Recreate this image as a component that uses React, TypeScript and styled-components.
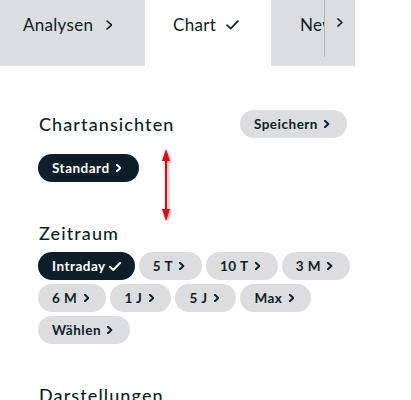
import React from 'react'
import styled, { createGlobalStyle } from 'styled-components'

const GlobalStyle = createGlobalStyle`
  html, body {
    margin: 0;
    padding: 0;
    background: #ffffff;
  }
  body {
    font-family: Lato, "Noto Sans", sans-serif;
    color: #0d1f28;
  }
`

const Page = styled.div`
  position: relative;
  width: 355px;
`

const TabStrip = styled.div`
  position: relative;
  display: flex;
  height: 66px;
  overflow: hidden;
`

const Tab = styled.div<{ $active?: boolean; $padLeft?: number; $width?: number }>`
  flex: none;
  display: flex;
  align-items: flex-start;
  gap: 8px;
  box-sizing: border-box;
  width: ${p => (p.$width ? `${p.$width}px` : 'auto')};
  padding: 15px 28px 0 ${p => p.$padLeft ?? 28}px;
  background: ${p => (p.$active ? '#ffffff' : '#dcdddf')};
  font-size: 17px;
  line-height: 20px;
  letter-spacing: 0.3px;
  color: #0d1f28;
  white-space: nowrap;
`

const TabIcon = styled.span`
  display: flex;
  align-items: center;
  justify-content: center;
  width: 16px;
  height: 20px;
`

const ScrollButton = styled.div`
  position: absolute;
  top: 0;
  right: 0;
  width: 31px;
  height: 57px;
  display: flex;
  justify-content: center;
  padding-top: 18px;
  box-sizing: border-box;
  background: #dcdddf;
  border-left: 1px solid #b4b5b7;
`

const Content = styled.div`
  padding: 44px 8px 0 38px;
  display: flex;
  flex-direction: column;
`

const Section = styled.section`
  display: flex;
  flex-direction: column;
  & + & {
    margin-top: 39px;
  }
`

const SectionHeader = styled.div`
  display: flex;
  align-items: center;
  justify-content: space-between;
  height: 28px;
  margin-bottom: 16px;
`

const Heading = styled.h2<{ $tight?: boolean }>`
  margin: ${p => (p.$tight ? '0 0 7px' : '0')};
  padding-left: 1px;
  font-size: 18px;
  line-height: 24px;
  font-weight: 500;
  letter-spacing: 1.1px;
  color: #0d1f28;
`

const Chips = styled.div`
  display: flex;
  flex-wrap: wrap;
  gap: 4px;
  margin-right: -7px;
`

const Chip = styled.button<{ $active?: boolean }>`
  display: inline-flex;
  align-items: center;
  gap: 1px;
  height: 28px;
  padding: 0 12px 0 14px;
  border: none;
  border-radius: 14px;
  background: ${p => (p.$active ? '#0c1f28' : '#dcdddf')};
  color: ${p => (p.$active ? '#ffffff' : '#0d1f28')};
  font-family: Lato, "Noto Sans", sans-serif;
  font-size: 13.5px;
  font-weight: 700;
  letter-spacing: 0.5px;
  white-space: nowrap;
  cursor: pointer;
`

const ChipIcon = styled.span`
  display: flex;
  align-items: center;
  justify-content: center;
  width: 16px;
  height: 16px;
`

const Annotation = styled.svg`
  position: absolute;
  left: 158px;
  top: 147px;
  overflow: visible;
`

const Chevron = ({ size = 8, stroke = 2 }: { size?: number; stroke?: number }) => (
  <svg width={size * 0.65} height={size} viewBox="0 0 6.5 10" fill="none">
    <polyline points="1,1 5.5,5 1,9" stroke="currentColor" strokeWidth={stroke * (10 / size)} strokeLinecap="round" strokeLinejoin="round" />
  </svg>
)

const Check = ({ width = 12, stroke = 2 }: { width?: number; stroke?: number }) => (
  <svg width={width} height={width * 0.75} viewBox="0 0 12 9" fill="none">
    <polyline points="1,4.8 4.3,8 11,1" stroke="currentColor" strokeWidth={stroke} strokeLinecap="round" strokeLinejoin="round" />
  </svg>
)

const periods = [
  { label: 'Intraday', active: true },
  { label: '5 T' },
  { label: '10 T' },
  { label: '3 M' },
  { label: '6 M' },
  { label: '1 J' },
  { label: '5 J' },
  { label: 'Max' },
  { label: 'Wählen' },
]

const App = () => {
  return (
    <Page>
      <GlobalStyle />
      <TabStrip>
        <Tab $padLeft={23} $width={145}>
          Analysen
          <TabIcon><Chevron size={10} stroke={1.6} /></TabIcon>
        </Tab>
        <Tab $active $width={126}>
          Chart
          <TabIcon><Check width={13} stroke={1.5} /></TabIcon>
        </Tab>
        <Tab $padLeft={29}>
          News
          <TabIcon><Chevron size={10} stroke={1.6} /></TabIcon>
        </Tab>
        <ScrollButton>
          <Chevron size={9} stroke={1.5} />
        </ScrollButton>
      </TabStrip>

      <Content>
        <Section>
          <SectionHeader>
            <Heading>Chartansichten</Heading>
            <Chip>
              Speichern
              <ChipIcon><Chevron /></ChipIcon>
            </Chip>
          </SectionHeader>
          <Chips>
            <Chip $active>
              Standard
              <ChipIcon><Chevron /></ChipIcon>
            </Chip>
          </Chips>
        </Section>

        <Section>
          <Heading $tight>Zeitraum</Heading>
          <Chips>
            {periods.map(period => {
              return (
                <Chip key={period.label} $active={period.active}>
                  {period.label}
                  <ChipIcon>
                    {period.active ? <Check /> : <Chevron />}
                  </ChipIcon>
                </Chip>
              )
            })}
          </Chips>
        </Section>

        <Section>
          <Heading>Darstellungen</Heading>
        </Section>
      </Content>

      <Annotation width="16" height="78" viewBox="0 0 16 78">
        <defs>
          <filter id="arrowShadow" x="-50%" y="-20%" width="200%" height="140%">
            <feDropShadow dx="1.5" dy="1.5" stdDeviation="1" floodColor="#000" floodOpacity="0.35" />
          </filter>
        </defs>
        <g filter="url(#arrowShadow)" fill="#e8000b" stroke="none">
          <rect x="7" y="10" width="2" height="56" />
          <polygon points="8,2 12,14 4,14" />
          <polygon points="8,74 12,62 4,62" />
        </g>
      </Annotation>
    </Page>
  )
}

export default App
